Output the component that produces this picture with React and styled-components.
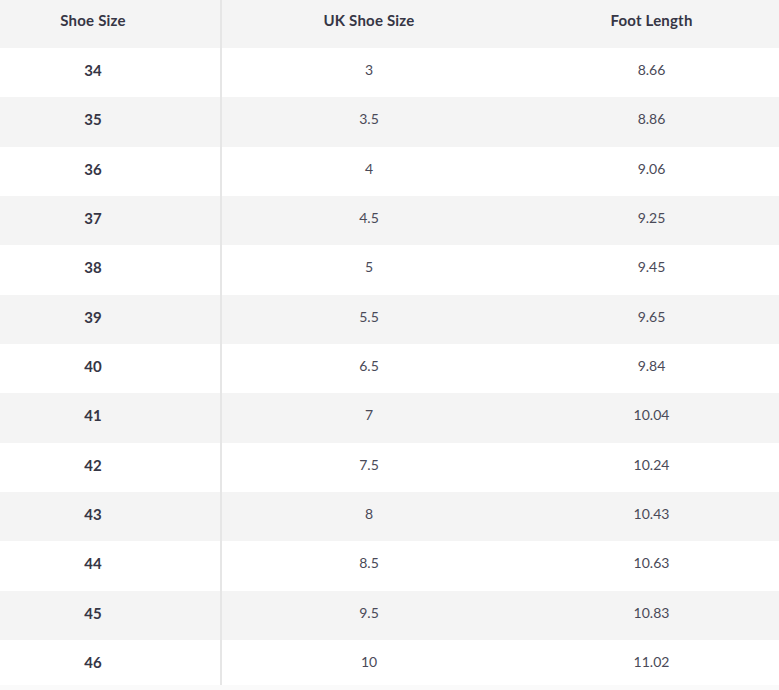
import React from 'react'
import styled, { createGlobalStyle } from 'styled-components'

const rows = [
  ['34', '3', '8.66'],
  ['35', '3.5', '8.86'],
  ['36', '4', '9.06'],
  ['37', '4.5', '9.25'],
  ['38', '5', '9.45'],
  ['39', '5.5', '9.65'],
  ['40', '6.5', '9.84'],
  ['41', '7', '10.04'],
  ['42', '7.5', '10.24'],
  ['43', '8', '10.43'],
  ['44', '8.5', '10.63'],
  ['45', '9.5', '10.83'],
  ['46', '10', '11.02'],
]

const Global = createGlobalStyle`
  body{
    margin:0;
    padding:0;
    background:#fafafa;
    font-family: Lato, "Open Sans", Arial, sans-serif;
  }
`

export default function App(){
  return (
    <>
      <Global />
      <Table>
        <Row $head>
          <Cell $first $bold $head>Shoe Size</Cell>
          <Divider />
          <Cell $bold $head>UK Shoe Size</Cell>
          <Cell $last $bold $head>Foot Length</Cell>
        </Row>
        {rows.map((r, i) => (
          <Row key={r[0]} $shade={i % 2 === 1} $end={i === rows.length - 1}>
            <Cell $first $bold>{r[0]}</Cell>
            <Divider />
            <Cell>{r[1]}</Cell>
            <Cell $last>{r[2]}</Cell>
          </Row>
        ))}
      </Table>
    </>
  )
}

const Table = styled.div`
  width:779px;
  display:flex;
  flex-direction:column;
  background:#fff;
`

const Row = styled.div`
  display:grid;
  grid-template-columns: 220px 2px 294px 1fr;
  height:${p => p.$head ? '48px' : p.$end ? '45.5px' : '49.33px'};
  background:${p => (p.$head || p.$shade) ? '#f4f4f4' : '#fff'};
`

const Cell = styled.div`
  display:flex;
  align-items:flex-start;
  justify-content:center;
  line-height:20px;
  padding-right:${p => p.$first ? '34px' : '0'};
  padding-left:${p => p.$last ? '8px' : '0'};
  padding-top:${p => p.$head ? '10px' : '12px'};
  font-size:${p => (p.$head || p.$bold) ? '15px' : '14px'};
  letter-spacing:${p => p.$head ? '0.2px' : '0'};
  font-weight:${p => p.$bold ? 700 : 400};
  color:${p => p.$bold ? '#363645' : '#4a4a58'};
`

const Divider = styled.div`
  background:#e6e6e6;
`
